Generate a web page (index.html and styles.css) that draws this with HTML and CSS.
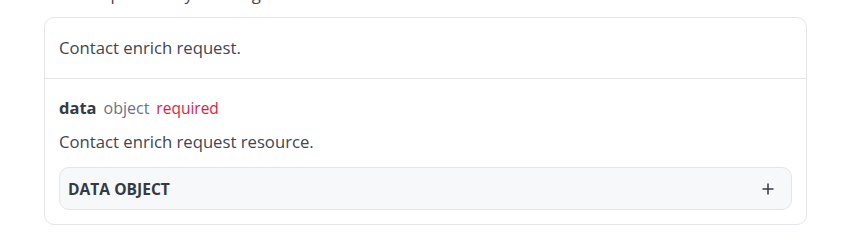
FILE: index.html
```html
<!DOCTYPE html>
<html lang="en">
<head>
<meta charset="utf-8">
<title>Contact enrich request</title>
<link rel="stylesheet" href="styles.css">
</head>
<body>
<div class="page">
  <p class="lead">The complete body is a long text.</p>
  <div class="card">
    <div class="card-head">Contact enrich request.</div>
    <div class="card-body">
      <div class="field">
        <span class="field-name">data</span>
        <span class="field-type">object</span>
        <span class="field-req">required</span>
      </div>
      <p class="field-desc">Contact enrich request resource.</p>
      <div class="child">
        <span class="child-title">DATA OBJECT</span>
        <svg class="plus" width="12" height="12" viewBox="0 0 12 12" aria-hidden="true">
          <path d="M6 0.5V11.5M0.5 6H11.5" stroke="#353a44" stroke-width="1.5" fill="none"/>
        </svg>
      </div>
    </div>
  </div>
</div>
</body>
</html>
```
FILE: styles.css
```css
* { box-sizing: border-box; }
html, body { margin: 0; padding: 0; background: #ffffff; }
body {
  font-family: "Open Sans", "Noto Sans", sans-serif;
  font-size: 16.7px;
  line-height: 24px;
  color: #414552;
  overflow: hidden;
}
.page {
  padding-left: 44px;
  width: 807px;
}
.lead {
  margin: -18px 0 0 0;
  color: #414552;
}
.card {
  margin-top: 11px;
  border: 1px solid #e3e5e8;
  border-radius: 10px;
  width: 763px;
}
.card-head {
  padding: 18px 14px 18px;
  border-bottom: 1px solid #e3e5e8;
}
.card-body {
  padding: 17px 14px 14px;
}
.field {
  display: flex;
  align-items: baseline;
  gap: 7px;
  font-size: 16px;
}
.field-name {
  font-weight: 700;
  font-size: 16.5px;
  color: #353a44;
}
.field-type { color: #687385; }
.field-req { color: #df1b41; font-size: 15.5px; }
.field-desc {
  margin: 10px 0 13px;
}
.child {
  display: flex;
  align-items: center;
  justify-content: space-between;
  height: 43px;
  padding: 0 17px 0 8px;
  background: #f7f8fa;
  border: 1px solid #e3e5e8;
  border-radius: 10px;
}
.child-title {
  font-size: 15.6px;
  font-weight: 700;
  color: #353a44;
}
.plus { display: block; }
```
